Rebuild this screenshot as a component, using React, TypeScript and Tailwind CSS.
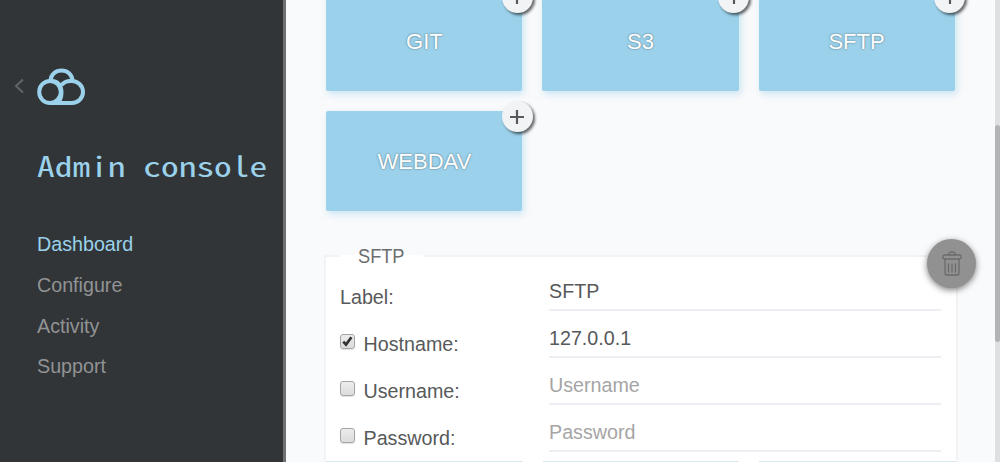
import React from "react";

const links = ["Dashboard", "Configure", "Activity", "Support"];

function PlusBadge() {
  return (
    <span className="absolute -right-[10.500px] -top-[9.500px] flex size-[31px] items-center justify-center rounded-full bg-[#f2f3f5] shadow-[2px_2px_3px_rgba(0,0,0,0.6)]">
      <svg width="14" height="14" viewBox="0 0 14 14" stroke="#57595a" strokeWidth="2.200">
        <path d="M7 0v14M0 7h14" />
      </svg>
    </span>
  );
}

function Card({ name }: { name: string }) {
  return (
    <div className="relative flex h-[99.6px] items-center justify-center rounded-[2px] bg-[#9bd1ea] pt-[2px] text-[22px] leading-none text-white shadow-[2px_3px_7px_rgba(155,209,234,0.5)] [text-shadow:0_0_2px_rgba(0,0,0,0.5)]">
      <span>{name}</span>
      <PlusBadge />
    </div>
  );
}

function CheckBox({ checked }: { checked: boolean }) {
  return (
    <span className="mr-[8.500px] mt-[-7px] block size-[15px] shrink-0 rounded-[3px] border border-[#a5a5a5] bg-gradient-to-b from-[#ececec] to-[#dcdcdc] shadow-[0_1px_1px_rgba(0,0,0,0.12)]">
      {checked && (
        <svg width="13" height="13" viewBox="0 0 13 13" fill="none" stroke="#333" strokeWidth="2.7">
          <path d="M2.3 6.6l2.7 3 5.4-7.4" />
        </svg>
      )}
    </span>
  );
}

type RowProps = { label: string; value?: string; placeholder?: string; checkbox?: boolean; checked?: boolean };

function Row({ label, value, placeholder, checkbox, checked }: RowProps) {
  return (
    <div className="flex h-[46.8px] shrink-0">
      <div className="flex h-[43px] w-[209px] items-center pt-[5px]">
        {checkbox && <CheckBox checked={!!checked} />}
        <span className="text-[19.7px] leading-none text-[#57595a]">{label}</span>
      </div>
      <div className="h-[37px] w-[392px] border-b-2 border-[#ebeef2] pt-[7px] text-[19.700px] leading-[20px]">
        <span className={value ? "text-[#57595a]" : "text-[#a5a5a5]"}>{value ?? placeholder}</span>
      </div>
    </div>
  );
}

function TrashIcon() {
  return (
    <svg width="20" height="25" viewBox="0 0 20 25" fill="none" stroke="#6b6b6b" strokeWidth="1.3" strokeLinecap="round">
      <path d="M7 4V3Q7 1 10 1T13 3V4" />
      <rect x="1" y="4" width="18" height="4" rx="1.5" />
      <path d="M3 8v14q0 2 2 2h10q2 0 2-2V8M6.5 13v8M10 13v8M13.5 13v8" />
    </svg>
  );
}

export default function App() {
  return (
    <div className="flex h-[462px] w-[1000px] overflow-hidden bg-[#f9fafc] font-['Liberation_Sans',sans-serif]">
      <aside className="w-[286px] shrink-0 border-r-[3px] border-[#6f7071] bg-[#313538]">
        <div className="flex items-center pl-[14px] pt-[67px]">
          <svg className="-mt-[2px]" width="10" height="16" viewBox="0 0 10 16" fill="none" stroke="#626466" strokeWidth="2">
            <path d="M9 1.5L2 8l7 6.5" />
          </svg>
          <svg className="ml-[13px]" width="50" height="39" viewBox="0 0 50 39" fill="none" stroke="#9bd1ea" strokeWidth="4" strokeLinejoin="round">
            <path d="M13.5 13.5C14 7.5 18.500 3.500 24.500 3.500S35 7.500 35.500 13.500" />
            <path d="M24.500 36H13A10.800 11 0 1 1 23.800 25C23.800 31 19 36 13 36M24.500 18C27 15 31 13.500 35 14A11 11 0 0 1 35 36H22M15 14C21 14 24.500 19 24.500 25C24.500 30 23.500 33 21 36" />
          </svg>
        </div>
        <h1 className="mt-[42px] whitespace-pre pl-[37px] font-['Noto_Sans_Mono_CJK_SC','Liberation_Mono',monospace] text-[28px] leading-[34px] text-[#9bd1ea]">
          <span className="inline-block origin-left scale-x-[1.265]">Admin console</span>
        </h1>
        <nav className="mt-[42px] flex flex-col pl-[37px] text-[19.7px] leading-[40.800px]">
          {links.map((link, i) => (
            <a key={link} className={i === 0 ? "text-[#9bd1ea]" : "text-[#929394]"}>{link}</a>
          ))}
        </nav>
      </aside>
      <main className="w-[709px] shrink-0 pl-[38px]">
        <section className="-mt-[9px] ml-[2.400px] grid w-[628.200px] grid-cols-3 gap-x-[20px] gap-y-[20.400px]">
          {["GIT", "S3", "SFTP", "WEBDAV"].map((name) => (
            <Card key={name} name={name} />
          ))}
        </section>
        <section className="relative mt-[44.600px] h-[240px] w-[634px] border-2 border-[#f2f3f5] bg-white">
          <h2 className="-mt-[14px] ml-[14px] h-[26px] w-[83px] bg-[linear-gradient(to_bottom,transparent_12px,white_12px)] pl-[18px] text-[20px] leading-[26px] text-[#6b6d6e]">
            <span className="inline-block origin-left scale-x-[0.91]">SFTP</span>
          </h2>
          <div className="flex h-[191px] flex-col pl-[14px] pt-[5px]">
            <Row label="Label:" value="SFTP" />
            <Row label="Hostname:" value="127.0.0.1" checkbox checked />
            <Row label="Username:" placeholder="Username" checkbox />
            <Row label="Password:" placeholder="Password" checkbox />
          </div>
          <div className="mt-px grid grid-cols-3 gap-[20px]">
            <span className="h-px bg-[#d6e8f2]" />
            <span className="h-px bg-[#d6e8f2]" />
            <span className="h-px bg-[#d6e8f2]" />
          </div>
          <button className="absolute -right-[20px] -top-[18px] flex size-[49px] items-center justify-center rounded-full bg-[#919191] shadow-[0_2px_6px_rgba(0,0,0,0.5)]">
            <TrashIcon />
          </button>
        </section>
      </main>
      <div className="w-[5px] shrink-0 bg-[#dfe0e1] pt-[125px]">
        <div className="h-[217px] rounded-[3px] bg-[#b3b4b5]" />
      </div>
    </div>
  );
}
